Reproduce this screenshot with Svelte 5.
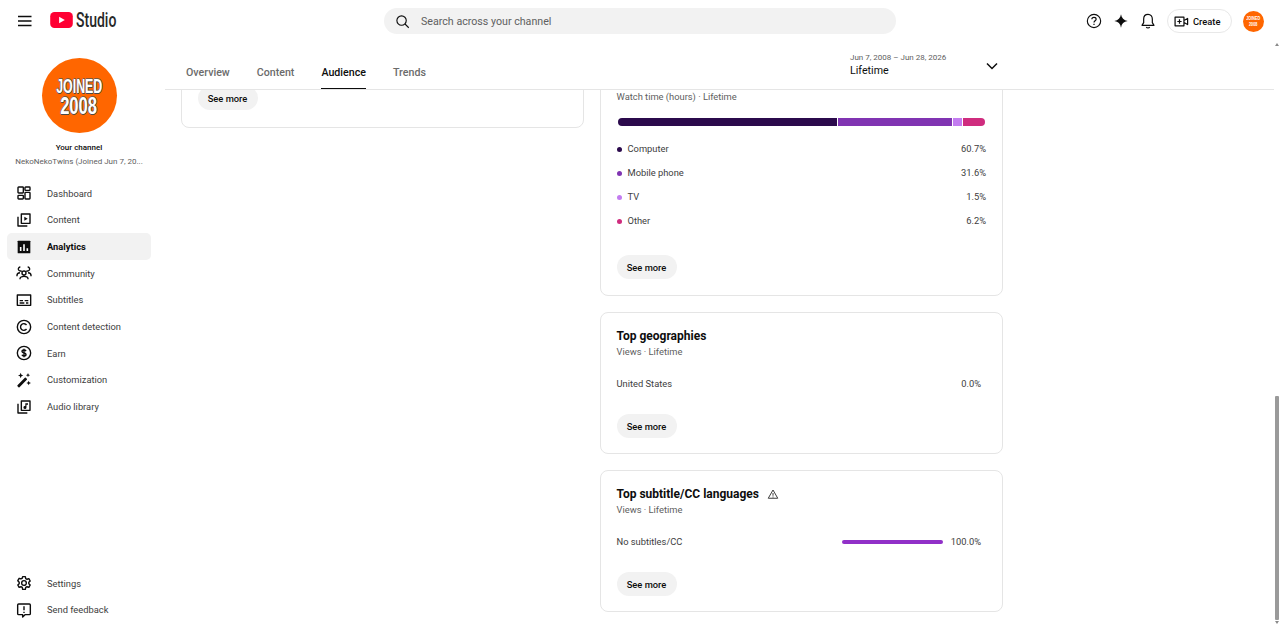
<script>
	const navItems = [
		{ label: 'Dashboard', d: 'M4 3h6a1 1 0 0 1 1 1v7a1 1 0 0 1-1 1H4a1 1 0 0 1-1-1V4a1 1 0 0 1 1-1zM14.500 3h5.500a1 1 0 0 1 1 1v3a1 1 0 0 1-1 1h-5.500a1 1 0 0 1-1-1V4a1 1 0 0 1 1-1zM4 15.500h6a1 1 0 0 1 1 1V20a1 1 0 0 1-1 1H4a1 1 0 0 1-1-1v-3.500a1 1 0 0 1 1-1zM14.500 11h5.500a1 1 0 0 1 1 1v8a1 1 0 0 1-1 1h-5.500a1 1 0 0 1-1-1v-8a1 1 0 0 1 1-1z' },
		{ label: 'Content', d: 'M8 3h13v14H8zM3 7v14h14', fill: 'M12.500 7v6l5-3z' },
		{ label: 'Analytics', active: true, solid: true },
		{ label: 'Community', d: 'M12 9a3 3 0 1 0 0 6 3 3 0 0 0 0-6zM6 21.500v-1c0-2 2.600-3.500 6-3.500s6 1.500 6 3.500v1M6.500 3a3 3 0 1 0 1.800 5.400M17.500 3a3 3 0 1 1-1.800 5.400M1.500 17v-1.500c0-2 1.700-3.500 4.500-3.800M22.500 17v-1.500c0-2-1.700-3.500-4.500-3.800' },
		{ label: 'Subtitles', d: 'M2 4.500h20v15.500H2zM5.500 13h5M13 13h5.500M5.500 16.500h7M15 16.500h3.500' },
		{ label: 'Content detection', d: 'M12 2a10 10 0 1 0 0 20 10 10 0 0 0 0-20zM15.800 9a5 5 0 1 0 0 6' },
		{ label: 'Earn', d: 'M12 2a10 10 0 1 0 0 20 10 10 0 0 0 0-20zM15 9.200c-.500-1-1.500-1.600-3-1.600-1.700 0-3 .800-3 2.200 0 3 6 1.500 6 4.400 0 1.400-1.300 2.200-3 2.200-1.500 0-2.600-.600-3.100-1.700M12 5.500v13' },
		{ label: 'Customization', d: 'M14 9.500 3 20.500 4.500 22 15.500 11zM12 11.500l1.500 1.500', fill: 'M7 1l1.200 3L11 5.200 8.200 6.400 7 9.400 5.800 6.400 3 5.200l2.800-1.200zM18 1.500l.9 2.300 2.300.900-2.300.900-.9 2.300-.9-2.300-2.300-.900 2.300-.900zM19 13l1 2.500 2.500 1-2.500 1-1 2.500-1-2.500-2.500-1 2.500-1z' },
		{ label: 'Audio library', d: 'M8 3h13v14H8zM3 7v14h14', fill: 'M14 6.500h4v2h-2.300v4.300a2.300 2.300 0 1 1-1.700-2.200z' }
	];
	const footItems = [
		{ label: 'Settings', d: 'M12 8.500a3.500 3.500 0 1 0 0 7 3.500 3.500 0 0 0 0-7zM10 2.500h4l.6 2.800 2 1.100 2.700-.900 2 3.500-2.100 1.900v2.200l2.100 1.900-2 3.500-2.700-.900-2 1.100-.6 2.800h-4l-.6-2.800-2-1.100-2.700.900-2-3.500 2.100-1.900v-2.200L2.700 8.500l2-3.500 2.700.900 2-1.100z' },
		{ label: 'Send feedback', d: 'M4 3h16a1.500 1.500 0 0 1 1.500 1.500v13A1.500 1.500 0 0 1 20 19h-6.500L10 22.500V19H4a1.500 1.500 0 0 1-1.500-1.500v-13A1.500 1.500 0 0 1 4 3zM12 6.500v6M12 14.500v2' }
	];
	const tabs = ['Overview', 'Content', 'Audience', 'Trends'];
	const devices = [
		{ name: 'Computer', value: '60.7%', color: '#2b0a4c', width: 219 },
		{ name: 'Mobile phone', value: '31.6%', color: '#8034b2', width: 114 },
		{ name: 'TV', value: '1.5%', color: '#c37cf0', width: 9 },
		{ name: 'Other', value: '6.2%', color: '#cf2c7e', width: 22 }
	];
</script>

{#snippet navRow(item)}
	<div class="nav-row" class:active={item.active}>
		<svg class="nav-icon" viewBox="0 0 24 24">
			{#if item.solid}
				<rect x="2.500" y="2.500" width="19" height="19" rx="1" fill="#0d0d0d" />
				<path d="M7 12v6M12 8v10M17 14v4" stroke="#fff" stroke-width="2.400" fill="none" />
			{:else}
				<path d={item.d} fill="none" stroke="#0d0d0d" stroke-width="2.100" stroke-linejoin="round" />
				{#if item.fill}<path d={item.fill} fill="#0d0d0d" />{/if}
			{/if}
		</svg>
		<span>{item.label}</span>
	</div>
{/snippet}

{#snippet seeMore()}
	<button class="see-more">See more</button>
{/snippet}

<div class="page">
	<header class="topbar">
		<div class="brand">
			<svg class="burger" viewBox="0 0 14 12"><path d="M0 1.500h13.500M0 6h13.500M0 10.500h13.500" stroke="#0d0d0d" stroke-width="1.300" /></svg>
			<svg class="yt" viewBox="0 0 24 17">
				<rect width="24" height="17" rx="4.500" fill="#ff0033" />
				<path d="M9.500 5v7l6-3.500z" fill="#fff" />
			</svg>
			<span class="studio">Studio</span>
		</div>
		<div class="search">
			<svg viewBox="0 0 24 24"><circle cx="10.500" cy="10.500" r="7.500" fill="none" stroke="#0d0d0d" stroke-width="1.800" /><path d="m16 16 6 6" stroke="#0d0d0d" stroke-width="1.800" /></svg>
			<span>Search across your channel</span>
		</div>
		<div class="actions">
			<svg class="act" viewBox="0 0 24 24"><circle cx="12" cy="12" r="10" fill="none" stroke="#0d0d0d" stroke-width="1.700" /><path d="M8.800 9.500c0-1.900 1.400-3 3.200-3s3.200 1.100 3.200 2.800c0 2.400-3.200 2.400-3.200 5M12 16v2" fill="none" stroke="#0d0d0d" stroke-width="1.800" /></svg>
			<svg class="act" viewBox="0 0 24 24"><path d="M12 2c.8 5.800 4.200 9.200 10 10-5.800.8-9.200 4.200-10 10-.8-5.800-4.200-9.200-10-10 5.800-.8 9.200-4.200 10-10z" fill="#0d0d0d" /></svg>
			<svg class="act" viewBox="0 0 24 24"><path d="M12 2c-4 0-6.500 3-6.500 7v5.500L3 18.500h18L18.500 14.500V9c0-4-2.500-7-6.500-7zM9.500 21c.5 1 1.400 1.500 2.500 1.500s2-.5 2.500-1.500" fill="none" stroke="#0d0d0d" stroke-width="1.800" stroke-linejoin="round" /></svg>
			<button class="create">
				<svg viewBox="0 0 24 18"><path d="M1.500 2h14.500v14H1.500zM16 7.500l6-3.500v10l-6-3.500M8.700 5.500v7M5.200 9h7" fill="none" stroke="#0d0d0d" stroke-width="2" stroke-linejoin="round" /></svg>
				Create
			</button>
			<div class="mini-avatar"><span>JOINED<br />2008</span></div>
		</div>
	</header>

	<div class="body">
		<aside class="sidebar">
			<div class="channel">
				<div class="big-avatar"><span class="l1">JOINED</span><span class="l2">2008</span></div>
				<div class="your">Your channel</div>
				<div class="handle">NekoNekoTwins (Joined Jun 7, 20...</div>
			</div>
			<nav>
				{#each navItems as item}
					{@render navRow(item)}
				{/each}
			</nav>
			<div class="foot">
				{#each footItems as item}
					{@render navRow(item)}
				{/each}
			</div>
		</aside>

		<main>
			<div class="tabbar">
				<div class="tabs">
					{#each tabs as tab}
						<div class="tab" class:current={tab === 'Audience'}>{tab}</div>
					{/each}
				</div>
				<div class="range">
					<div>
						<div class="dates">Jun 7, 2008 – Jun 28, 2026</div>
						<div class="period">Lifetime</div>
					</div>
					<svg viewBox="0 0 12 8"><path d="m1 1.500 5 5 5-5" fill="none" stroke="#0d0d0d" stroke-width="1.500" /></svg>
				</div>
			</div>

			<div class="content">
				<div class="column left">
					<section class="card">
						{@render seeMore()}
					</section>
				</div>
				<div class="column right">
					<section class="card device">
						<div class="sub">Watch time (hours) · Lifetime</div>
						<div class="stack">
							{#each devices as d}
								<i style="width:{d.width}px;background:{d.color}"></i>
							{/each}
						</div>
						<div class="legend">
							{#each devices as d}
								<div class="row">
									<b style="background:{d.color}"></b>
									<span class="name">{d.name}</span>
									<span>{d.value}</span>
								</div>
							{/each}
						</div>
						{@render seeMore()}
					</section>

					<section class="card">
						<h2>Top geographies</h2>
						<div class="sub">Views · Lifetime</div>
						<div class="row plain">
							<span class="name">United States</span>
							<span>0.0%</span>
						</div>
						{@render seeMore()}
					</section>

					<section class="card">
						<h2>
							Top subtitle/CC languages
							<svg class="warn" viewBox="0 0 24 24"><path d="M12 4 2.500 20.500h19zM12 10v5.500M12 17v2" fill="none" stroke="#3d3d3d" stroke-width="2" stroke-linejoin="round" /></svg>
						</h2>
						<div class="sub">Views · Lifetime</div>
						<div class="row plain">
							<span class="name">No subtitles/CC</span>
							<span class="meter"></span>
							<span>100.0%</span>
						</div>
						{@render seeMore()}
					</section>
				</div>
			</div>
		</main>

		<div class="scrollbar">
			<div class="arrow up"></div>
			<div class="thumb"></div>
			<div class="arrow down"></div>
		</div>
	</div>
</div>

<style>
	:global(body) {
		background: #fff;
	}
	.page {
		width: 1280px;
		height: 627px;
		overflow: hidden;
		display: flex;
		flex-direction: column;
		font-family: Roboto, 'Liberation Sans', sans-serif;
		color: #0d0d0d;
	}
	button {
		font-family: inherit;
		cursor: pointer;
	}

	.topbar {
		flex: 0 0 42px;
		display: grid;
		grid-template-columns: 1fr 512px 1fr;
		align-items: center;
	}
	.brand {
		display: flex;
		align-items: center;
		padding-left: 18px;
	}
	.burger {
		width: 14px;
		height: 12px;
	}
	.yt {
		width: 23px;
		height: 16px;
		margin-left: 18px;
		margin-top: -3px;
	}
	.studio {
		margin-left: 3px;
		font-size: 20px;
		font-weight: 500;
		line-height: 20px;
		color: #282828;
		transform: scaleX(0.7);
		transform-origin: left center;
		margin-top: -3px;
	}
	.search {
		height: 26px;
		background: #f2f2f2;
		border-radius: 13px;
		display: flex;
		align-items: center;
		padding-left: 11px;
		gap: 11px;
		font-size: 10.67px;
		color: #606060;
	}
	.search svg {
		width: 15px;
		height: 15px;
	}
	.actions {
		display: flex;
		align-items: center;
		justify-content: flex-end;
		padding-right: 16px;
	}
	.act {
		width: 16px;
		height: 16px;
		margin-right: 11px;
	}
	.create {
		display: flex;
		align-items: center;
		gap: 4px;
		width: 65px;
		height: 24px;
		padding: 0 0 0 6px;
		background: #fff;
		border: 1px solid #e8e8e8;
		border-radius: 12px;
		font-size: 9.33px;
		font-weight: 500;
		color: #0d0d0d;
		margin-right: 11px;
	}
	.create svg {
		width: 15px;
		height: 11px;
	}
	.mini-avatar,
	.big-avatar {
		border-radius: 50%;
		background: #ff6600;
		display: flex;
		flex-direction: column;
		align-items: center;
		justify-content: center;
		text-align: center;
		color: #fff;
		font-family: 'Liberation Sans', sans-serif;
		font-weight: 700;
	}
	.mini-avatar {
		width: 21px;
		height: 21px;
		font-size: 6px;
		line-height: 6px;
	}
	.mini-avatar span {
		display: block;
		transform: scaleX(0.62);
	}
	.big-avatar {
		width: 75px;
		height: 75px;
		text-shadow:
			1px 0 #4a4a4a,
			-1px 0 #7a5a40,
			0 1px #4a4a4a,
			0 -1px #7a5a40;
	}
	.l1 {
		font-size: 20px;
		line-height: 20px;
		transform: scaleX(0.62);
	}
	.l2 {
		font-size: 23px;
		line-height: 20px;
		transform: scaleX(0.72);
	}

	.body {
		flex: 1;
		display: flex;
		min-height: 0;
	}
	.sidebar {
		flex: 0 0 165px;
		display: flex;
		flex-direction: column;
		padding-top: 16px;
		padding-bottom: 4px;
		box-sizing: border-box;
	}
	.channel {
		width: 158px;
		display: flex;
		flex-direction: column;
		align-items: center;
	}
	.your {
		margin-top: 9px;
		font-size: 8px;
		font-weight: 500;
		line-height: 12px;
	}
	.handle {
		margin-top: 2px;
		font-size: 8px;
		line-height: 12px;
		color: #606060;
		white-space: nowrap;
	}
	nav {
		margin-top: 12px;
	}
	.foot {
		margin-top: auto;
	}
	.nav-row {
		height: 26.67px;
		width: 144px;
		margin-left: 7px;
		display: flex;
		align-items: center;
		padding-left: 8.500px;
		box-sizing: border-box;
		border-radius: 5px;
		font-size: 9.33px;
		color: #3d3d3d;
	}
	.nav-row.active {
		background: #f2f2f2;
		font-weight: 700;
		color: #0d0d0d;
	}
	.nav-icon {
		width: 16px;
		height: 16px;
		margin-right: 15.500px;
		flex: none;
	}

	main {
		flex: 1;
		min-width: 0;
		display: flex;
		flex-direction: column;
	}
	.tabbar {
		flex: 0 0 48px;
		box-sizing: border-box;
		border-bottom: 1px solid #e5e5e5;
		display: flex;
		align-items: flex-end;
		justify-content: space-between;
		padding: 0 271px 0 21px;
	}
	.tabs {
		display: flex;
		gap: 27px;
	}
	.tab {
		font-size: 10.67px;
		font-weight: 500;
		line-height: 14px;
		padding-bottom: 8px;
		border-bottom: 1.500px solid transparent;
		color: #6b6b6b;
	}
	.tab.current {
		color: #0d0d0d;
		border-bottom-color: #0d0d0d;
	}
	.range {
		width: 153px;
		display: flex;
		align-items: center;
		justify-content: space-between;
		padding: 0 5px 12px 0;
		box-sizing: border-box;
	}
	.range svg {
		width: 12px;
		height: 8px;
		margin-top: 3px;
	}
	.dates {
		font-size: 8px;
		line-height: 12px;
		color: #606060;
	}
	.period {
		font-size: 10.67px;
		line-height: 13px;
	}

	.content {
		flex: 1;
		min-height: 0;
		overflow: hidden;
		display: flex;
		gap: 16px;
		padding-left: 16px;
	}
	.column {
		width: 403px;
		display: flex;
		flex-direction: column;
		gap: 16px;
	}
	.left {
		margin-top: -40px;
	}
	.right {
		margin-top: -33px;
	}
	.card {
		box-sizing: border-box;
		border: 1px solid #e5e5e5;
		border-radius: 8px;
		padding: 15px 16px 15px 15.500px;
		font-size: 9.33px;
		color: #3d3d3d;
	}
	.left .card {
		padding-top: 35px;
		padding-bottom: 17px;
	}
	.left .see-more {
		margin-top: 0;
	}
	.device {
		padding-top: 33px;
		padding-bottom: 16px;
	}
	.device .sub {
		margin-top: 0;
	}
	h2 {
		margin: 0;
		display: flex;
		align-items: center;
		gap: 8px;
		font-size: 12px;
		line-height: 16px;
		font-weight: 700;
		color: #0d0d0d;
	}
	.warn {
		width: 12px;
		height: 12px;
	}
	.sub {
		margin-top: 2px;
		font-size: 9.33px;
		line-height: 12px;
		color: #606060;
	}
	.stack {
		margin-top: 15px;
		margin-left: 1px;
		height: 8px;
		width: 367px;
		display: flex;
		gap: 1px;
		border-radius: 4px;
		overflow: hidden;
	}
	.stack i {
		display: block;
		height: 100%;
	}
	.legend {
		margin-top: 17px;
		display: flex;
		flex-direction: column;
		gap: 12px;
	}
	.row {
		display: flex;
		align-items: center;
		line-height: 12px;
	}
	.row b {
		width: 5px;
		height: 5px;
		border-radius: 50%;
		margin-right: 6px;
	}
	.name {
		flex: 1;
	}
	.plain {
		margin-top: 20px;
		padding-right: 5px;
	}
	.meter {
		width: 101px;
		height: 4px;
		border-radius: 2px;
		background: #9130c8;
		margin-right: 8px;
	}
	.see-more {
		display: block;
		margin-top: 24px;
		width: 60px;
		height: 24px;
		padding: 0;
		border: none;
		border-radius: 12px;
		background: #f2f2f2;
		font-size: 9.33px;
		font-weight: 500;
		color: #0d0d0d;
	}
	.device .see-more {
		margin-top: 28px;
	}

	.scrollbar {
		flex: 0 0 6px;
		display: flex;
		flex-direction: column;
		align-items: center;
		padding-bottom: 3px;
		box-sizing: border-box;
	}
	.arrow {
		width: 0;
		height: 0;
		border-left: 2.500px solid transparent;
		border-right: 2.500px solid transparent;
	}
	.up {
		margin-top: 1px;
		border-bottom: 3px solid #8a8a8a;
	}
	.down {
		margin-top: 1px;
		border-top: 3px solid #8a8a8a;
	}
	.thumb {
		width: 4px;
		height: 224px;
		margin-top: auto;
		background: #9a9a9a;
		border-radius: 1px;
	}
</style>
